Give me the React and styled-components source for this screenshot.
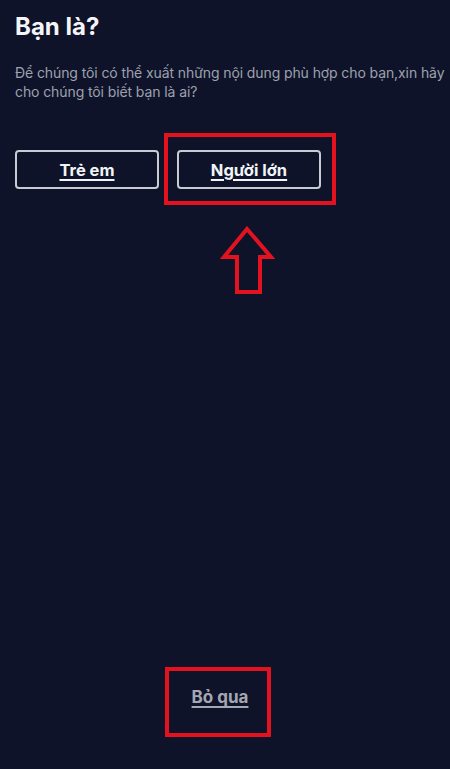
import React from "react";
import styled, { createGlobalStyle } from "styled-components";

const Global = createGlobalStyle`
  html, body { margin: 0; padding: 0; background: #0e132a; }
  body { font-family: Inter, "Noto Sans", sans-serif; -webkit-font-smoothing: antialiased; }
  * { box-sizing: border-box; }
`;

const Page = styled.div`
  min-height: 100vh;
  display: flex;
  flex-direction: column;
  padding: 12px 15px 0 15px;
  background: #0e132a;
  overflow: hidden;
`;

const Title = styled.h1`
  margin: 0;
  font-size: 24px;
  line-height: 30px;
  font-weight: 700;
  color: #f4f5f8;
`;

const Lead = styled.p`
  margin: 22px -10px 0 0;
  font-size: 14px;
  line-height: 18.5px;
  color: #9ea1ae;
  letter-spacing: -0.1px;
`;

const Choices = styled.div`
  display: flex;
  gap: 18px;
  margin-top: 49px;
`;

const Marked = styled.div`
  position: relative;
`;

const Frame = styled.div`
  position: absolute;
  top: ${(p) => p.$top}px;
  left: ${(p) => p.$left}px;
  right: ${(p) => p.$right}px;
  bottom: ${(p) => p.$bottom}px;
  border: 4px solid #e4121f;
  pointer-events: none;
`;

const Pointer = styled.svg`
  position: absolute;
  top: 76px;
  left: 42px;
`;

const Choice = styled.button`
  width: 144px;
  height: 39px;
  background: transparent;
  border: 2px solid #c9cbd1;
  border-radius: 4px;
  color: #f2f3f6;
  font-family: Inter, "Noto Sans", sans-serif;
  font-size: 16.5px;
  font-weight: 700;
  text-decoration: underline;
  text-underline-offset: 3px;
  text-decoration-thickness: 1.5px;
  cursor: pointer;
`;

const Spacer = styled.div`
  flex: 1;
`;

const Footer = styled.div`
  display: flex;
  justify-content: center;
  padding: 0 10px 62px 0;
`;

const Skip = styled.button`
  background: transparent;
  border: none;
  padding: 0;
  color: #a5a8b2;
  font-family: Inter, "Noto Sans", sans-serif;
  font-size: 17px;
  font-weight: 700;
  text-decoration: underline;
  text-underline-offset: 3px;
  text-decoration-thickness: 1.5px;
  cursor: pointer;
`;

export default function App() {
  return (
    <>
      <Global />
      <Page>
        <Title>Bạn là?</Title>
        <Lead>
          Để chúng tôi có thể xuất những nội dung phù hợp cho bạn,xin hãy cho
          chúng tôi biết bạn là ai?
        </Lead>
        <Choices>
          <Choice>Trẻ em</Choice>
          <Marked>
            <Choice>Người lớn</Choice>
            <Frame $top={-17} $left={-13} $right={-15} $bottom={-16} />
            <Pointer width="60" height="72" viewBox="0 0 60 72">
              <path
                d="M28 3 L52 31 L41 31 L41 66 L18 66 L18 31 L5 31 Z"
                fill="none"
                stroke="#e4121f"
                strokeWidth="4"
                strokeLinejoin="miter"
              />
            </Pointer>
          </Marked>
        </Choices>
        <Spacer />
        <Footer>
          <Marked>
            <Skip>Bỏ qua</Skip>
            <Frame $top={-20} $left={-27} $right={-23} $bottom={-30} />
          </Marked>
        </Footer>
      </Page>
    </>
  );
}
